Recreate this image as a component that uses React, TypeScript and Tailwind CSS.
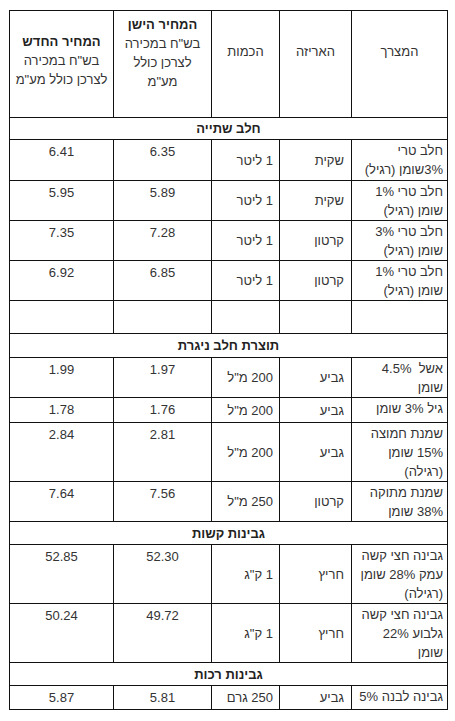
type Row =
  | { kind: 'cat'; label: string; h: string }
  | { kind: 'empty'; h: string }
  | { kind: 'item'; lines: string[]; pack: string; qty: string; oldP: string; newP: string; h: string };

const rows: Row[] = [
  { kind: 'cat', label: 'חלב שתייה', h: 'h-[22px]' },
  { kind: 'item', lines: ['חלב טרי', '3%שומן (רגיל)'], pack: 'שקית', qty: '1 ליטר', oldP: '6.35', newP: '6.41', h: 'h-[41px]' },
  { kind: 'item', lines: ['חלב טרי 1%', 'שומן (רגיל)'], pack: 'שקית', qty: '1 ליטר', oldP: '5.89', newP: '5.95', h: 'h-[40px]' },
  { kind: 'item', lines: ['חלב טרי 3%', 'שומן (רגיל)'], pack: 'קרטון', qty: '1 ליטר', oldP: '7.28', newP: '7.35', h: 'h-[40px]' },
  { kind: 'item', lines: ['חלב טרי 1%', 'שומן (רגיל)'], pack: 'קרטון', qty: '1 ליטר', oldP: '6.85', newP: '6.92', h: 'h-[40px]' },
  { kind: 'empty', h: 'h-[33px]' },
  { kind: 'cat', label: 'תוצרת חלב ניגרת', h: 'h-[24px]' },
  { kind: 'item', lines: ['אשל \u00a04.5%', 'שומן'], pack: 'גביע', qty: '200 מ"ל', oldP: '1.97', newP: '1.99', h: 'h-[39px]' },
  { kind: 'item', lines: ['גיל 3% שומן'], pack: 'גביע', qty: '200 מ"ל', oldP: '1.76', newP: '1.78', h: 'h-[25px]' },
  { kind: 'item', lines: ['שמנת חמוצה', '15% שומן', '(רגילה)'], pack: 'גביע', qty: '200 מ"ל', oldP: '2.81', newP: '2.84', h: 'h-[59px]' },
  { kind: 'item', lines: ['שמנת מתוקה', '38% שומן'], pack: 'קרטון', qty: '250 מ"ל', oldP: '7.56', newP: '7.64', h: 'h-[40px]' },
  { kind: 'cat', label: 'גבינות קשות', h: 'h-[23px]' },
  { kind: 'item', lines: ['גבינה חצי קשה', 'עמק 28% שומן', '(רגילה)'], pack: 'חריץ', qty: '1 ק"ג', oldP: '52.30', newP: '52.85', h: 'h-[59px]' },
  { kind: 'item', lines: ['גבינה חצי קשה', 'גלבוע 22%', 'שומן'], pack: 'חריץ', qty: '1 ק"ג', oldP: '49.72', newP: '50.24', h: 'h-[59px]' },
  { kind: 'cat', label: 'גבינות רכות', h: 'h-[23px]' },
  { kind: 'item', lines: ['גבינה לבנה 5%'], pack: 'גביע', qty: '250 גרם', oldP: '5.81', newP: '5.87', h: 'h-[24px]' },
];

const cell = 'border border-[#111] p-0';

export default function App() {
  return (
    <div
      className="min-h-screen bg-white pt-[10px] pl-[9px] text-[13px] leading-[19px] text-[#333]"
      style={{ fontFamily: '"Liberation Sans", Arial, sans-serif' }}
    >
      <table dir="rtl" className="w-[438px] table-fixed border-collapse">
        <colgroup>
          <col className="w-[96px]" />
          <col className="w-[72px]" />
          <col className="w-[68px]" />
          <col className="w-[98px]" />
          <col className="w-[104px]" />
        </colgroup>
        <thead>
          <tr className="h-[107px]">
            <td className={`${cell} align-top pt-[31px] text-center`}>המצרך</td>
            <td className={`${cell} align-top pt-[31px] text-center`}>האריזה</td>
            <td className={`${cell} align-top pt-[31px] text-center`}>הכמות</td>
            <td className={`${cell} align-top pt-[4px] text-center`}>
              <div className="font-bold text-[#222]">המחיר הישן</div>
              <div>בש"ח במכירה</div>
              <div>לצרכן כולל</div>
              <div>מע"מ</div>
            </td>
            <td className={`${cell} align-top pt-[21px] text-center`}>
              <div className="font-bold text-[#222]">המחיר החדש</div>
              <div>בש"ח במכירה</div>
              <div>לצרכן כולל מע"מ</div>
            </td>
          </tr>
        </thead>
        <tbody>
          {rows.map((r, i) => {
            if (r.kind === 'cat') {
              return (
                <tr key={i} className={r.h}>
                  <td colSpan={5} className={`${cell} align-middle text-center font-bold text-[#222]`}>
                    {r.label}
                  </td>
                </tr>
              );
            }
            if (r.kind === 'empty') {
              return (
                <tr key={i} className={r.h}>
                  <td className={cell} />
                  <td className={cell} />
                  <td className={cell} />
                  <td className={cell} />
                  <td className={cell} />
                </tr>
              );
            }
            return (
              <tr key={i} className={r.h}>
                <td className={`${cell} align-top pt-[1px] pr-[4px] text-right`}>
                  {r.lines.map((l, j) => (
                    <div key={j}>{l}</div>
                  ))}
                </td>
                <td className={`${cell} align-middle pr-[7px] text-right`}>{r.pack}</td>
                <td className={`${cell} align-middle pr-[6px] text-right`}>{r.qty}</td>
                <td className={`${cell} align-top pt-[2px] text-center`}>{r.oldP}</td>
                <td className={`${cell} align-top pt-[2px] text-center`}>{r.newP}</td>
              </tr>
            );
          })}
        </tbody>
      </table>
    </div>
  );
}
